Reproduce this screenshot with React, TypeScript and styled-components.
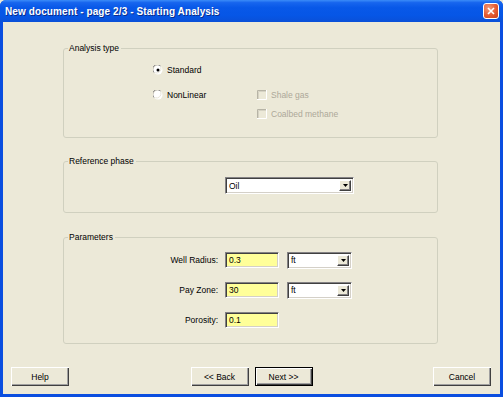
import React from "react";
import styled, { createGlobalStyle } from "styled-components";

const GlobalStyle = createGlobalStyle`
  html, body {
    margin: 0;
    padding: 0;
    background: #ece9d8;
  }
  body {
    font-family: "Liberation Sans", Arial, sans-serif;
    font-size: 8.5px;
    color: #000;
  }
`;

const Window = styled.div`
  width: 503px;
  height: 397px;
  box-sizing: border-box;
  display: flex;
  flex-direction: column;
  background: #0a4ee0;
  border-radius: 6px 6px 0 0;
  overflow: hidden;
`;

const TitleBar = styled.div`
  height: 22px;
  flex: none;
  display: flex;
  align-items: center;
  justify-content: space-between;
  padding: 0 4px 0 5px;
  background: linear-gradient(
    to bottom,
    #3b8cf8 0%,
    #1765ee 12%,
    #0858e8 35%,
    #0656e6 70%,
    #0a50d8 100%
  );
`;

const Title = styled.span`
  color: #fff;
  font-weight: bold;
  font-size: 10px;
  letter-spacing: 0.1px;
  text-shadow: 1px 1px 0 #0a2d8c;
`;

const CloseButton = styled.div`
  width: 16px;
  height: 16px;
  box-sizing: border-box;
  border: 1px solid #fff;
  border-radius: 3px;
  background: radial-gradient(circle at 35% 30%, #f29a7a 0%, #e45a32 55%, #c7401a 100%);
  display: flex;
  align-items: center;
  justify-content: center;
`;

const Client = styled.div`
  flex: 1;
  margin: 0 3px 3px;
  background: #ece9d8;
  display: flex;
  flex-direction: column;
`;

const Content = styled.div`
  padding: 20px 0 0 60px;
  display: flex;
  flex-direction: column;
`;

const Group = styled.fieldset<{ $h: number; $top: number }>`
  margin: ${({ $top }) => $top}px 0 0 0;
  width: 375px;
  height: ${({ $h }) => $h}px;
  box-sizing: border-box;
  border: 1px solid #d0d0bf;
  border-radius: 3px;
  padding: 0;
  min-width: 0;
`;

const Legend = styled.legend`
  margin-left: 4px;
  padding: 0 2px 0 1px;
  line-height: 12px;
  font-size: 8.5px;
`;

const TypeGrid = styled.div`
  display: grid;
  grid-template-columns: 104px auto;
  grid-template-rows: 25px 19px 14px;
  padding: 9px 0 0 89px;
`;

const Option = styled.label<{ $disabled?: boolean }>`
  display: flex;
  align-items: center;
  gap: 4px;
  height: 14px;
  color: ${({ $disabled }) => ($disabled ? "#aca899" : "#000")};
`;

const PhaseRow = styled.div`
  padding: 10px 0 0 161px;
`;

const ParamGrid = styled.div`
  display: grid;
  grid-template-columns: 153px 54px 65px;
  grid-auto-rows: 16px;
  column-gap: 8px;
  row-gap: 14px;
  padding-top: 9px;
  align-items: center;
`;

const ParamLabel = styled.span`
  text-align: right;
  margin-right: -1px;
`;

const Field = styled.div`
  height: 16px;
  box-sizing: border-box;
  background: #ffff99;
  border-top: 1px solid #848284;
  border-left: 1px solid #848284;
  border-right: 1px solid #fff;
  border-bottom: 1px solid #fff;
  box-shadow: inset 1px 1px 0 #404040, inset -1px -1px 0 #d4d0c8;
  padding: 0 3px;
  display: flex;
  align-items: center;
`;

const Combo = styled.div<{ $w: number }>`
  width: ${({ $w }) => $w}px;
  height: 17px;
  box-sizing: border-box;
  background: #fff;
  border-top: 1px solid #848284;
  border-left: 1px solid #848284;
  border-right: 1px solid #fff;
  border-bottom: 1px solid #fff;
  box-shadow: inset 1px 1px 0 #404040, inset -1px -1px 0 #d4d0c8;
  display: flex;
  align-items: center;
  padding: 0 2px 0 3px;
  justify-content: space-between;
`;

const ComboArrow = styled.div`
  width: 12px;
  height: 11px;
  box-sizing: border-box;
  background: #ece9d8;
  border-top: 1px solid #fff;
  border-left: 1px solid #fff;
  border-right: 1px solid #404040;
  border-bottom: 1px solid #404040;
  box-shadow: inset -1px -1px 0 #848284;
  display: flex;
  align-items: center;
  justify-content: center;
`;

const Footer = styled.div`
  margin-top: auto;
  display: grid;
  grid-template-columns: 1fr auto 1fr;
  align-items: center;
  padding: 0 9px 8px 8px;
`;

const NavGroup = styled.div`
  display: flex;
  gap: 6px;
  margin-left: 1px;
`;

const Button = styled.button<{ $default?: boolean; $align?: "start" | "end" }>`
  justify-self: ${({ $align }) => $align ?? "center"};
  width: 58px;
  height: 19px;
  box-sizing: border-box;
  padding: 0;
  font-family: "Liberation Sans", Arial, sans-serif;
  font-size: 8.5px;
  color: #000;
  background: #ece9d8;
  border: ${({ $default }) => ($default ? "1px solid #000" : "none")};
  box-shadow: ${({ $default }) =>
    $default
      ? "inset 1px 1px 0 #fff, inset -1px -1px 0 #404040, inset -2px -2px 0 #a0a0a0"
      : "inset 1px 1px 0 #fff, inset -1px -1px 0 #404040, inset -2px -2px 0 #a0a0a0"};
`;

function Radio({ checked }: { checked?: boolean }) {
  return (
    <svg width="10" height="10" viewBox="0 0 10 10">
      <circle cx="5" cy="5" r="4.5" fill="#fff" />
      <path d="M1 7.5 A4.5 4.5 0 0 1 7.5 1" stroke="#848284" fill="none" />
      <path d="M7.8 2.2 A4.5 4.5 0 0 1 2.2 7.8" stroke="#e6e3d6" fill="none" />
      {checked && <circle cx="5" cy="5" r="1.5" fill="#000" />}
    </svg>
  );
}

function Check({ disabled }: { disabled?: boolean }) {
  return (
    <svg width="10" height="10" viewBox="0 0 10 10">
      <rect x="0" y="0" width="10" height="10" fill={disabled ? "#ece9d8" : "#fff"} />
      <path d="M0.5 10 V0.5 H10" stroke="#b7b4a6" fill="none" />
      <path d="M1.5 9 V1.5 H9" stroke="#d6d3c4" fill="none" />
      <path d="M0 9.5 H9.5 V0" stroke="#fff" fill="none" />
    </svg>
  );
}

function Arrow() {
  return (
    <ComboArrow>
      <svg width="5" height="3" viewBox="0 0 5 3">
        <path d="M0 0 H5 L2.5 3 Z" fill="#000" />
      </svg>
    </ComboArrow>
  );
}

export default function App() {
  return (
    <>
      <GlobalStyle />
      <Window>
        <TitleBar>
          <Title>New document - page 2/3 - Starting Analysis</Title>
          <CloseButton>
            <svg width="8" height="8" viewBox="0 0 8 8">
              <path d="M1 1 L7 7 M7 1 L1 7" stroke="#fff" strokeWidth="1.6" />
            </svg>
          </CloseButton>
        </TitleBar>
        <Client>
          <Content>
            <Group $h={96} $top={0}>
              <Legend>Analysis type</Legend>
              <TypeGrid>
                <Option>
                  <Radio checked />
                  Standard
                </Option>
                <span />
                <Option>
                  <Radio />
                  NonLinear
                </Option>
                <Option $disabled>
                  <Check disabled />
                  Shale gas
                </Option>
                <span />
                <Option $disabled>
                  <Check disabled />
                  Coalbed methane
                </Option>
              </TypeGrid>
            </Group>

            <Group $h={58} $top={17}>
              <Legend>Reference phase</Legend>
              <PhaseRow>
                <Combo $w={129}>
                  <span>Oil</span>
                  <Arrow />
                </Combo>
              </PhaseRow>
            </Group>

            <Group $h={113} $top={18}>
              <Legend>Parameters</Legend>
              <ParamGrid>
                <ParamLabel>Well Radius:</ParamLabel>
                <Field>0.3</Field>
                <Combo $w={65}>
                  <span>ft</span>
                  <Arrow />
                </Combo>
                <ParamLabel>Pay Zone:</ParamLabel>
                <Field>30</Field>
                <Combo $w={65}>
                  <span>ft</span>
                  <Arrow />
                </Combo>
                <ParamLabel>Porosity:</ParamLabel>
                <Field>0.1</Field>
                <span />
              </ParamGrid>
            </Group>
          </Content>

          <Footer>
            <Button $align="start">Help</Button>
            <NavGroup>
              <Button>&lt;&lt; Back</Button>
              <Button $default>Next &gt;&gt;</Button>
            </NavGroup>
            <Button $align="end">Cancel</Button>
          </Footer>
        </Client>
      </Window>
    </>
  );
}
